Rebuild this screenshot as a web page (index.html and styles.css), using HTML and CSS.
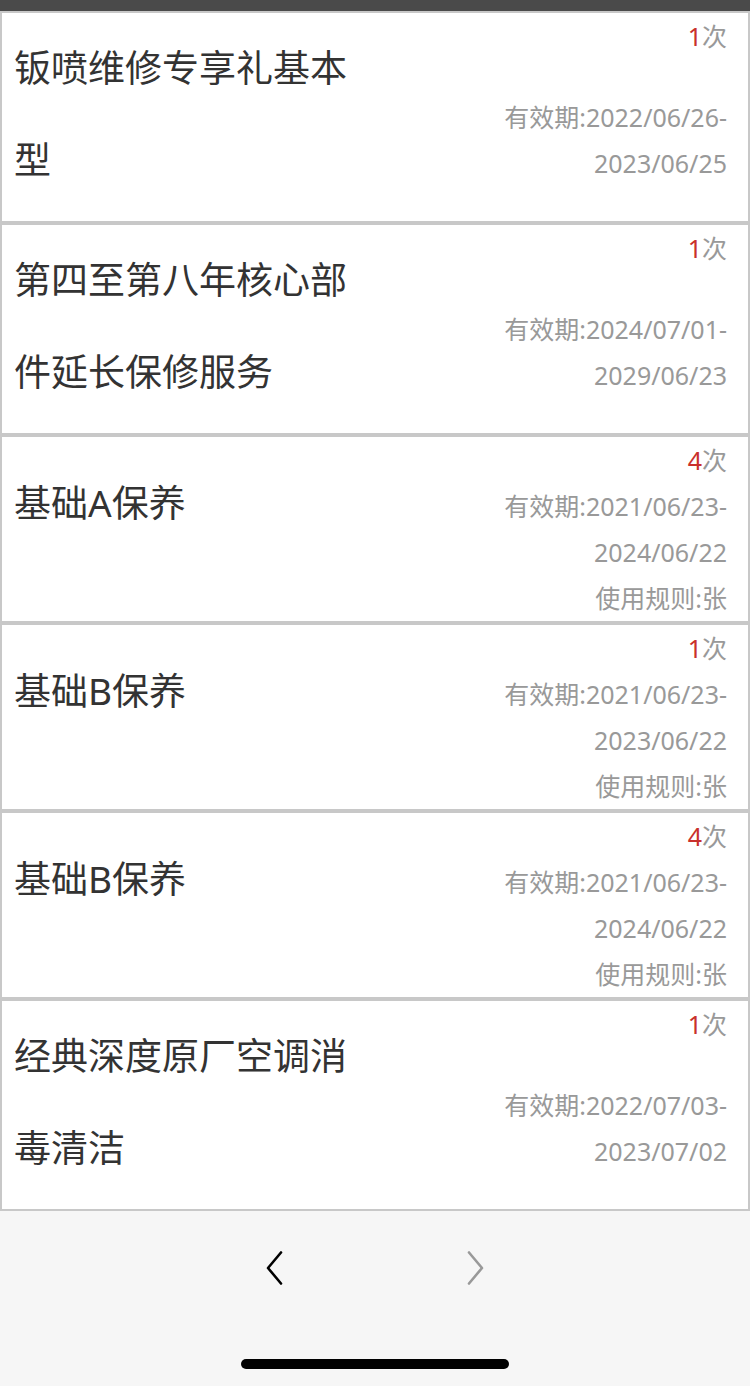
FILE: index.html
```html
<!DOCTYPE html>
<html lang="zh-CN">
<head>
  <meta charset="UTF-8" />
  <meta name="viewport" content="width=device-width, initial-scale=1.0" />
  <title>我的权益</title>
  <link rel="stylesheet" href="styles.css">
</head>
<body>
  <div class="topbar"></div>

  <div class="list">
    <div class="card">
      <div class="card-main">
        <div class="title">钣喷维修专享礼基本型</div>
        <div class="side">
          <div class="count"><span class="num">1</span>次</div>
          <div class="dates">有效期:2022/06/26-<br>2023/06/25</div>
        </div>
      </div>
    </div>

    <div class="card">
      <div class="card-main">
        <div class="title">第四至第八年核心部件延长保修服务</div>
        <div class="side">
          <div class="count"><span class="num">1</span>次</div>
          <div class="dates">有效期:2024/07/01-<br>2029/06/23</div>
        </div>
      </div>
    </div>

    <div class="card">
      <div class="card-main">
        <div class="title">基础A保养</div>
        <div class="side">
          <div class="count"><span class="num">4</span>次</div>
          <div class="dates">有效期:2021/06/23-<br>2024/06/22</div>
        </div>
      </div>
      <div class="rule">使用规则:张</div>
    </div>

    <div class="card">
      <div class="card-main">
        <div class="title">基础B保养</div>
        <div class="side">
          <div class="count"><span class="num">1</span>次</div>
          <div class="dates">有效期:2021/06/23-<br>2023/06/22</div>
        </div>
      </div>
      <div class="rule">使用规则:张</div>
    </div>

    <div class="card">
      <div class="card-main">
        <div class="title">基础B保养</div>
        <div class="side">
          <div class="count"><span class="num">4</span>次</div>
          <div class="dates">有效期:2021/06/23-<br>2024/06/22</div>
        </div>
      </div>
      <div class="rule">使用规则:张</div>
    </div>

    <div class="card">
      <div class="card-main">
        <div class="title">经典深度原厂空调消毒清洁</div>
        <div class="side">
          <div class="count"><span class="num">1</span>次</div>
          <div class="dates">有效期:2022/07/03-<br>2023/07/02</div>
        </div>
      </div>
    </div>
  </div>

  <div class="pager">
    <button class="page-btn">
      <svg width="18" height="34" viewBox="0 0 18 34"><path d="M16 1.5 L3 17 L16 32.5" fill="none" stroke="#000" stroke-width="2.6" stroke-linecap="round" stroke-linejoin="round"/></svg>
    </button>
    <button class="page-btn">
      <svg width="18" height="34" viewBox="0 0 18 34"><path d="M2 1.5 L15 17 L2 32.5" fill="none" stroke="#999" stroke-width="2.6" stroke-linecap="round" stroke-linejoin="round"/></svg>
    </button>
  </div>

  <div class="home-bar"></div>
</body>
</html>
```

FILE: styles.css
```css
:root {
  --bg-color: #f6f6f6;
  --card-bg: #ffffff;
  --border-color: #c8c8c8;
  --title-color: #333333;
  --muted: #999999;
  --accent: #c9302c;
}

body {
  background-color: var(--bg-color);
  font-family: "Noto Sans", "Noto Sans CJK SC", sans-serif;
  margin: 0;
}

.topbar {
  height: 11px;
  background-color: #4a4a4a;
}

.card {
  background-color: var(--card-bg);
  border: 2px solid var(--border-color);
}

.card-main {
  display: flex;
  align-items: center;
}

.title {
  flex: 0 0 345px;
  padding: 9px 0 15px 12px;
  font-size: 37px;
  line-height: 92px;
  color: var(--title-color);
}

.side {
  flex: 1;
  align-self: stretch;
  display: flex;
  flex-direction: column;
  padding-right: 21px;
  text-align: right;
  font-size: 25px;
  line-height: 46px;
  color: var(--muted);
}

.num {
  color: var(--accent);
}

.dates {
  flex: 1;
  display: flex;
  flex-direction: column;
  justify-content: center;
}

.rule {
  padding-right: 21px;
  text-align: right;
  font-size: 25px;
  line-height: 46px;
  color: var(--muted);
}

.pager {
  display: flex;
  justify-content: center;
  gap: 142px;
  padding-top: 40px;
}

.page-btn {
  width: 60px;
  height: 34px;
  padding: 0;
  border: none;
  background: none;
  display: flex;
  align-items: center;
  justify-content: center;
}

.home-bar {
  width: 268px;
  height: 10px;
  margin: 74px auto 0;
  border-radius: 5px;
  background-color: #000;
}
```
